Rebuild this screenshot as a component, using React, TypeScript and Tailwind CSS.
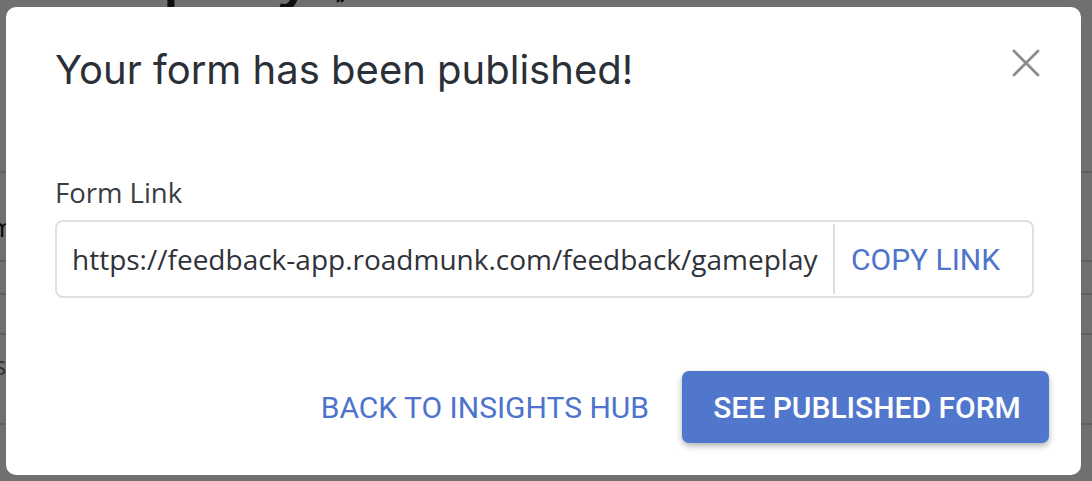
import React from 'react';

const rowLines = [171, 260, 293, 333, 423];

function CloseIcon() {
  return (
    <svg width="28" height="28" viewBox="0 0 28 28" fill="none">
      <path d="M2 2 L26 26 M26 2 L2 26" stroke="#8c8c8c" strokeWidth="2.8" strokeLinecap="round" />
    </svg>
  );
}

export default function App() {
  return (
    <div className="relative h-[481px] w-[1092px] overflow-hidden bg-white">
      {/* page underneath */}
      <div className="absolute left-[-60px] top-[-85px] flex items-end gap-4 text-[80px] leading-[100px] text-[#222] [font-family:Inter,sans-serif]">
        <span>Gameplay</span>
        <svg width="24" height="24" viewBox="0 0 24 24" className="mb-[10px]">
          <path d="M3 21 L18 6 M7 21 L21 7" stroke="#2a2a2a" strokeWidth="2.4" />
        </svg>
      </div>
      {rowLines.map((y) => (
        <div key={y} className="absolute left-0 right-0 h-[2px] bg-[#d8d8d8]" style={{ top: y }} />
      ))}
      <span className="absolute left-[-10px] top-[208px] text-[26px] text-[#111] [font-family:'Open_Sans',sans-serif]">m</span>
      <span className="absolute left-[-6px] top-[346px] text-[26px] text-[#777] [font-family:'Open_Sans',sans-serif]">s</span>

      {/* backdrop + dialog */}
      <div className="absolute inset-0 bg-[rgba(0,0,0,0.56)] pl-[6px] pt-[7px]">
        <div className="flex h-[468px] w-[1075px] flex-col rounded-[10px] bg-white px-[49px] pt-[39px]">
          <div className="flex items-start justify-between">
            <h1 className="text-[40px] leading-[48px] text-[#2b3038] [font-family:Inter,sans-serif]">
              Your form has been published!
            </h1>
            <button className="mr-[-8px] mt-[3px]">
              <CloseIcon />
            </button>
          </div>

          <label className="mt-[80px] text-[27.5px] leading-[38px] text-[#383d44] [font-family:'Open_Sans',sans-serif]">
            Form Link
          </label>
          <div className="mt-[8px] flex h-[78px] w-[979px] items-center rounded-[8px] border-2 border-[#e0e0e0]">
            <span className="flex-1 pl-[15px] text-[28px] text-[#2f3339] [font-family:'Open_Sans',sans-serif]">
              https://feedback-app.roadmunk.com/feedback/gameplay
            </span>
            <div className="h-[70px] w-[2px] bg-[#dedede]" />
            <button className="w-[197px] pl-[16px] text-left text-[30px] text-[#4f74cc] [font-family:Roboto,sans-serif]">
              COPY LINK
            </button>
          </div>

          <div className="mt-[73px] flex items-center justify-end gap-[33px]">
            <button className="text-[30px] text-[#4d73cc] [font-family:Roboto,sans-serif]">
              BACK TO INSIGHTS HUB
            </button>
            <button className="mr-[-17px] h-[72px] w-[367px] rounded-[7px] bg-[#5177cd] pl-[3px] text-[30px] font-medium text-white shadow-[0_3px_6px_rgba(0,0,0,0.3)] [font-family:Roboto,sans-serif]">
              SEE PUBLISHED FORM
            </button>
          </div>
        </div>
      </div>
    </div>
  );
}
